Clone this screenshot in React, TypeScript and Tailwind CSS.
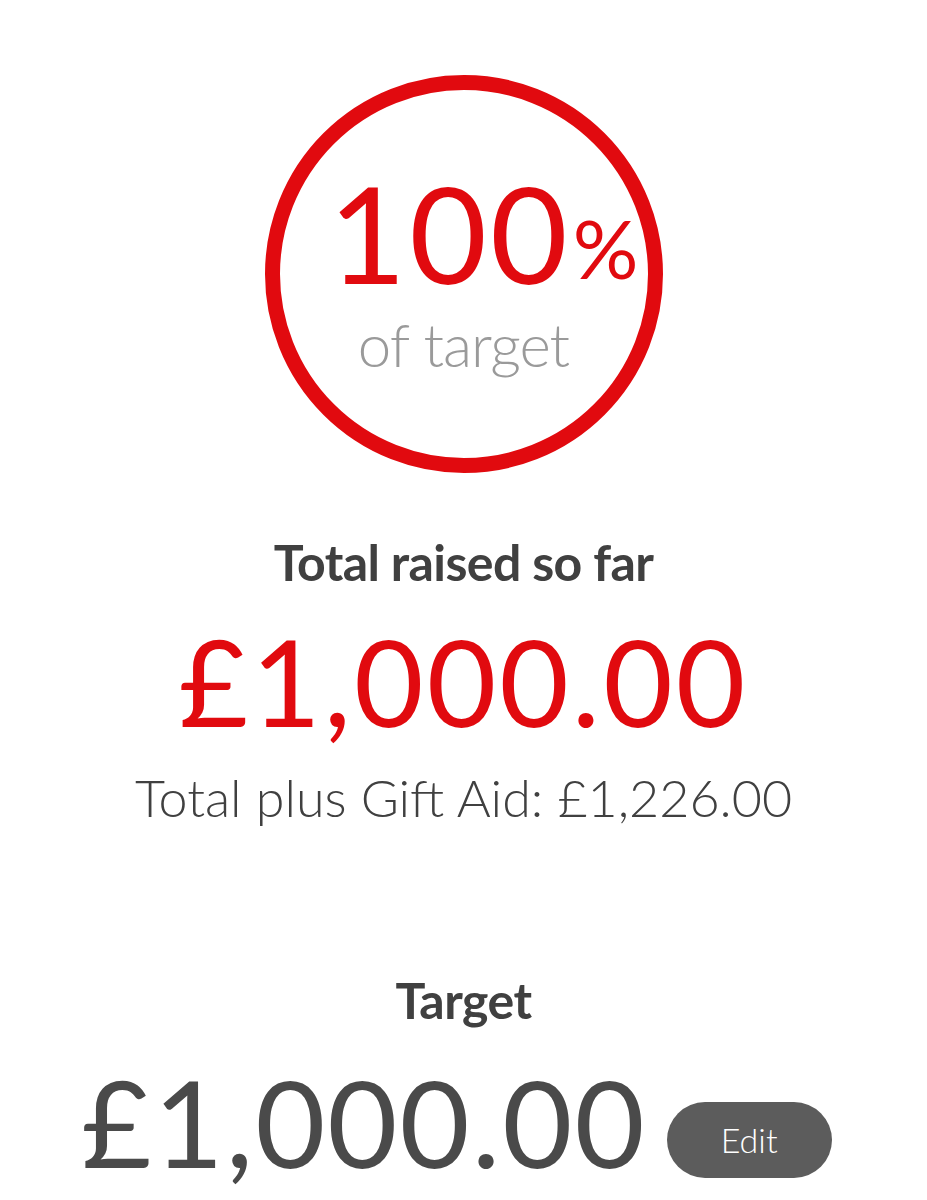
import React from 'react';

const App: React.FC = () => {
  return (
    <div className="min-h-[1200px] w-full bg-white font-['Lato',_sans-serif] flex flex-col items-center overflow-hidden">
      {/* Progress ring */}
      <div className="mt-[75px] w-[398px] h-[398px] rounded-full border-[15px] border-[#e10a0f] flex flex-col items-center justify-center">
        <div className="flex items-end leading-none text-[#e10a0f] mt-[-8px] ml-[40px]">
          <span className="text-[134px] leading-none tracking-[3px]">100</span>
          <span className="text-[82px] leading-none mb-[12px] ml-[2px]">%</span>
        </div>
        <div className="text-[60px] leading-none text-[#9a9a9a] mt-[14px] tracking-[-1px] font-light">of target</div>
      </div>

      {/* Total raised */}
      <h2 className="mt-[64px] text-[50px] leading-none font-bold text-[#404040] tracking-[-0.6px]">Total raised so far</h2>
      <div className="mt-[34px] text-[120px] leading-none text-[#e10a0f] tracking-[3px]">£1,000.00</div>
      <p className="mt-[30px] text-[52px] leading-none font-light text-[#404040]">Total plus Gift Aid: £1,226.00</p>

      {/* Target */}
      <h2 className="mt-[152px] text-[50px] leading-none font-bold text-[#404040] tracking-[-0.5px]">Target</h2>
      <div className="mt-[36px] flex items-end gap-[20px] ml-[-14px]">
        <span className="text-[121px] leading-none text-[#4a4a4a] tracking-[2px]">£1,000.00</span>
        <button className="mb-[4px] w-[165px] h-[76px] rounded-full bg-[#5c5c5c] text-white text-[34px] font-light leading-none">
          Edit
        </button>
      </div>
    </div>
  );
};

export default App;
